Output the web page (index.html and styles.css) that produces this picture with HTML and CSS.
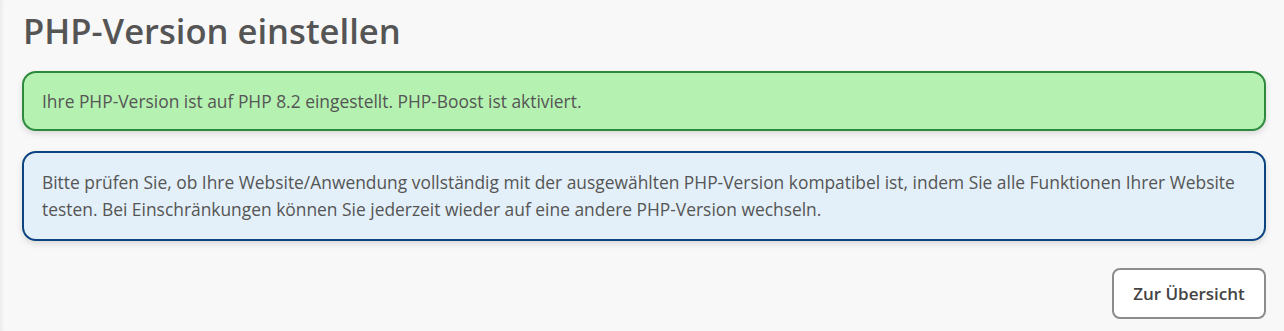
FILE: index.html
```html
<!DOCTYPE html>
<html lang="de">
<head>
  <meta charset="UTF-8">
  <meta name="viewport" content="width=device-width, initial-scale=1.0">
  <title>PHP-Version einstellen</title>
  <link rel="stylesheet" href="styles.css">
</head>
<body>
  <main class="page">
    <h1>PHP-Version einstellen</h1>

    <div class="notice notice-success">
      Ihre PHP-Version ist auf PHP 8.2 eingestellt. PHP-Boost ist aktiviert.
    </div>

    <div class="notice notice-info">
      Bitte prüfen Sie, ob Ihre Website/Anwendung vollständig mit der ausgewählten PHP-Version kompatibel ist, indem Sie alle Funktionen Ihrer Website testen. Bei Einschränkungen können Sie jederzeit wieder auf eine andere PHP-Version wechseln.
    </div>

    <div class="actions">
      <a class="button" href="#">Zur Übersicht</a>
    </div>
  </main>
</body>
</html>
```

FILE: styles.css
```css
html,
body {
  margin: 0;
  height: 100%;
}
body {
  font-family: 'Open Sans', 'Noto Sans', sans-serif;
  background: #f8f8f8;
  color: #555;
  box-shadow: inset 5px 0 5px -4px rgba(0, 0, 0, 0.08);
}
.page {
  padding: 8px 18px 0 22px;
}
h1 {
  font-size: 34.6px;
  font-weight: 600;
  color: #555;
  margin: 0 0 17px 1px;
  line-height: 46px;
}
.notice {
  border: 2px solid;
  border-radius: 14px;
  padding: 16px 18px;
  font-size: 17.4px;
  line-height: 27px;
  margin-bottom: 20px;
  box-shadow: 0 3px 6px rgba(0, 0, 0, 0.12);
}
.notice-success {
  background: #b5f2b1;
  border-color: #2d8a3c;
  padding: 15px 18px 14px;
}
.notice-info {
  background: #e3f0f9;
  border-color: #0b4481;
}
.actions {
  display: flex;
  justify-content: flex-end;
  padding-top: 7px;
}
.button {
  display: inline-block;
  box-sizing: border-box;
  width: 154px;
  height: 51px;
  line-height: 47px;
  text-align: center;
  background: #fff;
  border: 2px solid #8c8c8c;
  border-radius: 8px;
  font-size: 17px;
  font-weight: 600;
  color: #444;
  text-decoration: none;
}
```
